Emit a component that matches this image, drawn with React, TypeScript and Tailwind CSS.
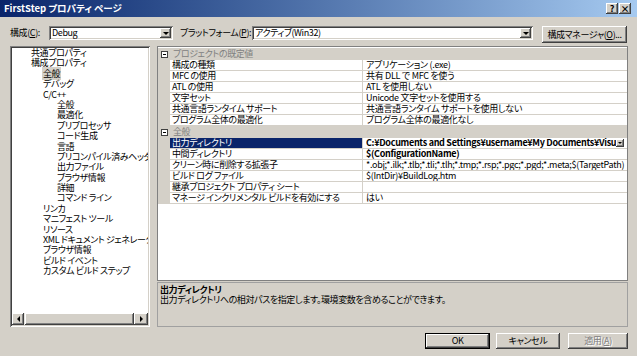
import React from 'react';

const raised =
  'shadow-[inset_-1px_-1px_#404040,inset_1px_1px_#ffffff,inset_-2px_-2px_#808080,inset_2px_2px_#d4d0c8]';
const sunken =
  'shadow-[inset_1px_1px_#808080,inset_-1px_-1px_#ffffff,inset_2px_2px_#404040,inset_-2px_-2px_#d4d0c8]';

type TreeItem = [number, string, boolean?];

const treeItems: TreeItem[] = [
  [0, '共通プロパティ'],
  [0, '構成プロパティ'],
  [1, '全般', true],
  [1, 'デバッグ'],
  [1, 'C/C++'],
  [2, '全般'],
  [2, '最適化'],
  [2, 'プリプロセッサ'],
  [2, 'コード生成'],
  [2, '言語'],
  [2, 'プリコンパイル済みヘッダー'],
  [2, '出力ファイル'],
  [2, 'ブラウザ情報'],
  [2, '詳細'],
  [2, 'コマンド ライン'],
  [1, 'リンカ'],
  [1, 'マニフェスト ツール'],
  [1, 'リソース'],
  [1, 'XML ドキュメント ジェネレータ'],
  [1, 'ブラウザ情報'],
  [1, 'ビルド イベント'],
  [1, 'カスタム ビルド ステップ'],
];

const indent: Record<number, string> = {
  0: 'pl-[19px]',
  1: 'pl-[31px]',
  2: 'pl-[45px]',
};

function Arrow({ dir }: { dir: 'down' | 'left' | 'right' }) {
  const pts = dir === 'down' ? '0,0 6,0 3,3' : dir === 'left' ? '3,0 3,6 0,3' : '0,0 0,6 3,3';
  const w = dir === 'down' ? 6 : 3;
  const h = dir === 'down' ? 3 : 6;
  return (
    <svg width={w} height={h} viewBox={`0 0 ${w} ${h}`}>
      <polygon points={pts} fill="#000" />
    </svg>
  );
}

function Combo({ value, className }: { value: string; className: string }) {
  return (
    <div className={`flex h-[14px] items-center bg-white p-[2px] ${sunken} ${className}`}>
      <span className="flex-1 pl-[1px] leading-[10px]">{value}</span>
      <div className={`flex h-[10px] w-[11px] items-center justify-center bg-[#d4d0c8] ${raised}`}>
        <Arrow dir="down" />
      </div>
    </div>
  );
}

function TitleButton({ children }: { children: React.ReactNode }) {
  return (
    <div
      className={`flex h-[11px] w-[12px] items-center justify-center bg-[#d4d0c8] text-[9px] font-bold leading-[9px] tracking-normal text-black ${raised}`}
    >
      {children}
    </div>
  );
}

function Category({ label }: { label: string }) {
  return (
    <div className="flex h-[12px] items-center bg-[#d4d0c8]">
      <div className="flex w-[13px] justify-center">
        <svg width="7" height="7" viewBox="0 0 7 7">
          <rect x="0.5" y="0.5" width="6" height="6" fill="#fff" stroke="#404040" />
          <line x1="2" y1="3.5" x2="5" y2="3.5" stroke="#000" />
        </svg>
      </div>
      <span className="pl-[2px] text-[#808080]">{label}</span>
    </div>
  );
}

function Row({
  name,
  value,
  selected,
  bold,
}: {
  name: string;
  value: string;
  selected?: boolean;
  bold?: boolean;
}) {
  return (
    <div className="flex h-[11px]">
      <div className="w-[12px] bg-[#d4d0c8]" />
      <div
        className={`w-[192px] overflow-hidden whitespace-nowrap border-b border-[#d4d0c8] pl-[2px] ${
          selected ? 'bg-[#0a246a] text-white' : ''
        }`}
      >
        {name}
      </div>
      <div className="w-px bg-[#d4d0c8]" />
      <div className="flex flex-1 items-start overflow-hidden border-b border-[#d4d0c8] pl-[3px]">
        <span className={`flex-1 overflow-hidden whitespace-nowrap tracking-[-0.3px] ${bold ? 'font-bold' : ''}`}>
          {value}
        </span>
        {selected && (
          <div
            className={`mr-[3px] mt-[1px] flex h-[8px] w-[8px] shrink-0 items-center justify-center bg-[#d4d0c8] ${raised}`}
          >
            <svg width="4" height="2" viewBox="0 0 4 2">
              <polygon points="0,0 4,0 2,2" fill="#000" />
            </svg>
          </div>
        )}
      </div>
    </div>
  );
}

export default function App() {
  return (
    <div className="flex h-[356px] w-[637px] flex-col overflow-hidden bg-[#d4d0c8] font-['Noto_Sans_CJK_JP',sans-serif] text-[9px] leading-[10px] tracking-[-0.4px] text-black [font-feature-settings:'palt']">
      {/* タイトルバー */}
      <div className="flex h-[17px] items-center gap-[1px] bg-linear-to-r from-[#0a246a] to-[#a6caf0] pl-[4px] pr-[6px]">
        <span className="flex-1 text-[9.5px] font-bold leading-[11px] tracking-normal text-white">
          FirstStep プロパティ ページ
        </span>
        <TitleButton>?</TitleButton>
        <TitleButton>×</TitleButton>
      </div>

      {/* 構成 / プラットフォーム */}
      <div className="mt-[9px] flex h-[17px] items-start pl-[10px]">
        <span className="mt-[2px] w-[39px] whitespace-nowrap">
          構成(<u>C</u>):
        </span>
        <Combo value="Debug" className="w-[124px]" />
        <span className="ml-[7px] mt-[2px] w-[72px] whitespace-nowrap">
          プラットフォーム(<u>P</u>):
        </span>
        <Combo value="アクティブ(Win32)" className="w-[281px]" />
        <div className={`ml-[9px] flex h-[17px] w-[85px] items-center justify-center bg-[#d4d0c8] ${raised}`}>
          構成マネージャ(<u>O</u>)...
        </div>
      </div>

      {/* 本体 */}
      <div className="mt-[3px] flex h-[281px] pl-[10px]">
        {/* ツリー */}
        <div className={`flex w-[140px] flex-col bg-white p-[2px] ${sunken}`}>
          <div className="flex-1 overflow-hidden">
            {treeItems.map(([lvl, label, sel], i) => (
              <div key={i} className={`h-[10.4px] whitespace-nowrap leading-[10.4px] ${indent[lvl]}`}>
                <span className={sel ? '-ml-[1px] bg-[#d4d0c8] px-[1px]' : ''}>{label}</span>
              </div>
            ))}
          </div>
          <div className="flex h-[12px] bg-[#e8e6e1]">
            <div className={`flex w-[12px] items-center justify-center bg-[#d4d0c8] ${raised}`}>
              <Arrow dir="left" />
            </div>
            <div className={`ml-[1px] flex-1 bg-[#d4d0c8] ${raised}`} />
            <div className={`flex w-[14px] items-center justify-center bg-[#d4d0c8] ${raised}`}>
              <Arrow dir="right" />
            </div>
          </div>
        </div>

        {/* プロパティ グリッド */}
        <div className="ml-[7px] flex w-[471px] flex-col">
          <div className="h-[235px] overflow-hidden border border-[#808080] bg-white pt-[1px]">
            <Category label="プロジェクトの既定値" />
            <Row name="構成の種類" value="アプリケーション (.exe)" />
            <Row name="MFC の使用" value="共有 DLL で MFC を使う" />
            <Row name="ATL の使用" value="ATL を使用しない" />
            <Row name="文字セット" value="Unicode 文字セットを使用する" />
            <Row name="共通言語ランタイム サポート" value="共通言語ランタイム サポートを使用しない" />
            <Row name="プログラム全体の最適化" value="プログラム全体の最適化なし" />
            <Category label="全般" />
            <Row
              name="出力ディレクトリ"
              value="C:¥Documents and Settings¥username¥My Documents¥Visual Studio 2005¥Projects"
              selected
              bold
            />
            <Row name="中間ディレクトリ" value="$(ConfigurationName)" bold />
            <Row
              name="クリーン時に削除する拡張子"
              value="*.obj;*.ilk;*.tlb;*.tli;*.tlh;*.tmp;*.rsp;*.pgc;*.pgd;*.meta;$(TargetPath)"
            />
            <Row name="ビルド ログ ファイル" value="$(IntDir)¥BuildLog.htm" />
            <Row name="継承プロジェクト プロパティ シート" value="" />
            <Row name="マネージ インクリメンタル ビルドを有効にする" value="はい" />
          </div>
          <div className="mt-[1px] flex-1 border border-[#a0a0a0] px-[2px] pt-[2px]">
            <div className="font-bold">出力ディレクトリ</div>
            <div>出力ディレクトリへの相対パスを指定します。環境変数を含めることができます。</div>
          </div>
        </div>
      </div>

      {/* ボタン */}
      <div className="mt-[6px] flex justify-end pr-[9px]">
        <div className={`flex h-[16px] w-[65px] items-center justify-center border border-black bg-[#d4d0c8] ${raised}`}>
          OK
        </div>
        <div className={`ml-[6px] flex h-[16px] w-[64px] items-center justify-center bg-[#d4d0c8] ${raised}`}>
          キャンセル
        </div>
        <div
          className={`ml-[8px] flex h-[16px] w-[60px] items-center justify-center bg-[#d4d0c8] text-[#808080] [text-shadow:1px_1px_#ffffff] ${raised}`}
        >
          適用(<u>A</u>)
        </div>
      </div>
    </div>
  );
}
